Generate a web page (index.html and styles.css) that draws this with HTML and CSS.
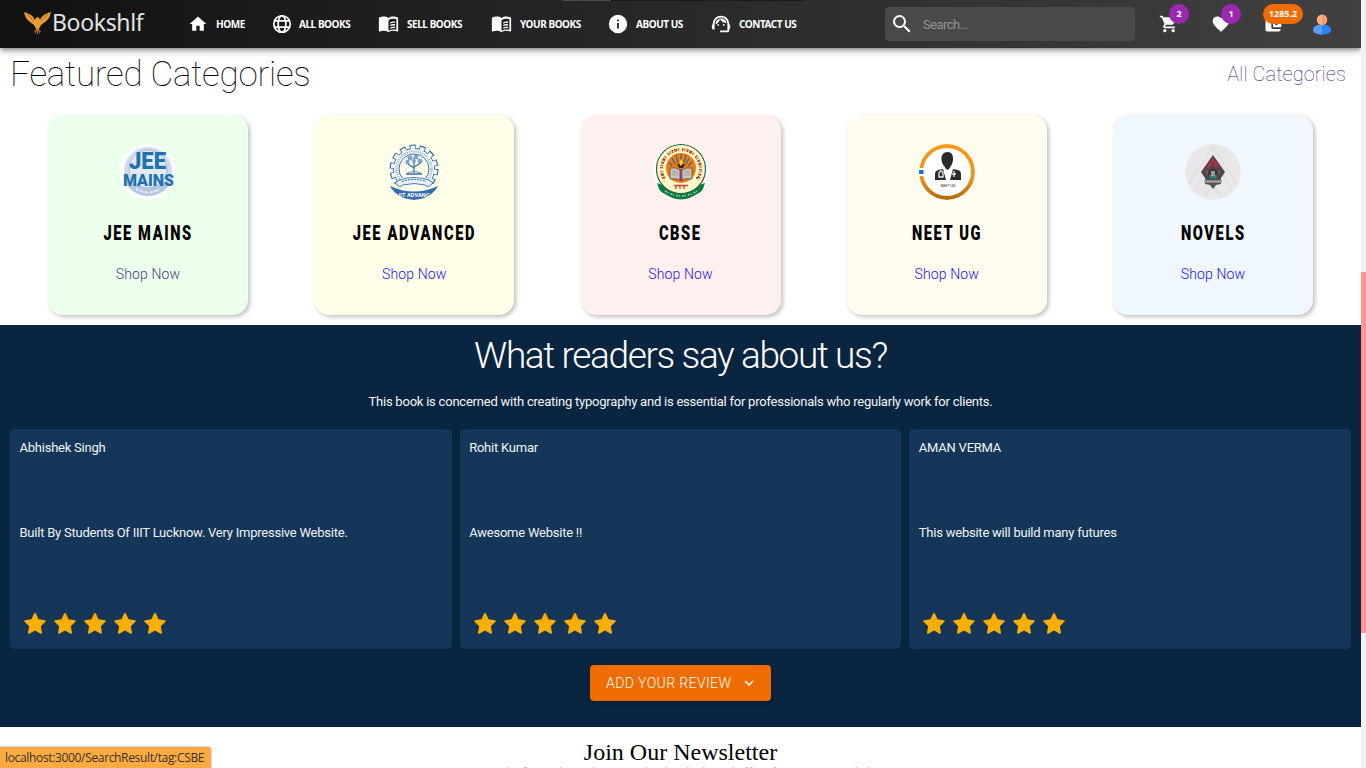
FILE: index.html
```html
<!DOCTYPE html>
<html lang="en">
<head>
<meta charset="utf-8">
<title>Bookshlf</title>
<link rel="stylesheet" href="styles.css">
</head>
<body>
<svg class="defs" width="0" height="0">
  <symbol id="book" viewBox="0 0 24 24"><path d="M12 4.500C9 2.400 4.300 2.500 1.500 4Q1 4.300 1 5v14.500c0 .6.400.7.900.5 3.300-1.200 7-1 10.100.9 3-1.900 6.700-2.100 10.100-.9.500.2.900 0 .9-.500V5q0-.7-.500-1C19.700 2.500 15 2.400 12 4.500zM21 18c-2.700-.8-6.300-.4-9 1V7c2.500-1.500 6.200-1.900 9-1z"/><path d="M14 9.300c1.900-.8 3.500-.9 5.500-.6v1.500c-2-.3-3.600-.1-5.500.6zm0 3c1.900-.8 3.500-.9 5.500-.6v1.500c-2-.3-3.600-.1-5.500.6zm0 3c1.900-.8 3.500-.9 5.500-.6v1.500c-2-.3-3.600-.1-5.500.6z"/></symbol>
  <symbol id="star" viewBox="0 0 24 24"><path d="M12 1c.400 0 .7.200.9.600l3 6.300 6.900 1c.9.100 1.200 1.100.6 1.700l-5 5 1.200 7c.1.800-.7 1.400-1.400 1L12 20.300l-6.200 3.300c-.7.400-1.500-.2-1.400-1l1.200-7-5-5C0 10 .3 9 1.200 8.900l6.900-1 3-6.300c.2-.4.5-.6.9-.6z"/></symbol>
</svg>
<div class="page">
  <header class="navbar">
    <div class="tab-strip"></div>
    <a class="logo">
      <svg class="bird" viewBox="0 0 27 23"><path fill="#e79a35" d="M0 0c4 1 9 3 11 8l1-2 1.500-1L15 6l1 2c2-5 7-7 11-8-1 5-3 8-6 10l-4 3-2 4-1.500 1L12 17l-2-4-4-3C3 8 1 5 0 0z"/><path stroke="#6b4219" stroke-width=".5" fill="none" d="M3 2l7 7M24 2l-7 7"/><path fill="none" stroke="#b9742b" stroke-width="1.200" d="M13.500 17l-3 3M13.500 17l3 3M13.500 17v5M11 21h1M15 21h1"/></svg>
      <span class="brand">Bookshlf</span>
    </a>
    <nav class="links">
      <a class="link home"><svg viewBox="0 0 24 24"><path d="M10 20v-6h4v6h5v-8h3L12 3 2 12h3v8z"/></svg><span>HOME</span></a>
      <a class="link all"><svg viewBox="0 0 24 24"><g fill="none" stroke="#fff" stroke-width="1.900"><circle cx="12" cy="12" r="9"/><ellipse cx="12" cy="12" rx="4.200" ry="9"/><path d="M3.500 8.700h17M3.500 15.300h17"/></g></svg><span>ALL BOOKS</span></a>
      <a class="link sell"><svg><use href="#book"/></svg><span>SELL BOOKS</span></a>
      <a class="link your"><svg><use href="#book"/></svg><span>YOUR BOOKS</span></a>
      <a class="link about"><svg viewBox="0 0 24 24"><path d="M12 2a10 10 0 1 0 0 20 10 10 0 0 0 0-20zm1 15h-2v-6h2zm0-8h-2V7h2z"/></svg><span>ABOUT US</span></a>
      <a class="link contact"><svg viewBox="0 0 24 24"><path d="M21 12.220C21 6.730 16.740 3 12 3c-4.690 0-9 3.650-9 9.280-.600.340-1 .980-1 1.720v2c0 1.100.900 2 2 2h1v-6.100c0-3.870 3.130-7 7-7s7 3.130 7 7V19h-8v2h8c1.100 0 2-.900 2-2v-1.220c.590-.310 1-.920 1-1.640v-2.300c0-.700-.410-1.310-1-1.620z"/><circle cx="9" cy="13" r="1"/><circle cx="15" cy="13" r="1"/><path d="M18 11.030A6.040 6.040 0 0 0 12.050 6c-3.030 0-6.290 2.510-6.030 6.450a8.075 8.075 0 0 0 4.860-5.890c1.310 2.630 4 4.440 7.120 4.470z"/></svg><span>CONTACT US</span></a>
    </nav>
    <div class="search">
      <svg viewBox="0 0 24 24"><path d="M15.500 14h-.790l-.280-.270A6.471 6.471 0 0 0 16 9.500 6.500 6.500 0 1 0 9.500 16c1.610 0 3.090-.590 4.230-1.570l.270.280v.790l5 4.990L20.490 19zm-6 0a4.500 4.500 0 1 1 0-9 4.500 4.500 0 0 1 0 9z"/></svg>
      <span>Search...</span>
    </div>
    <div class="actions">
      <a class="action"><svg viewBox="0 0 24 24"><path d="M7 18a2 2 0 1 0 0 4 2 2 0 0 0 0-4zM1 2v2h2l3.600 7.590-1.350 2.450C4.500 15.400 5.500 17 7 17h12v-2H7.420l-.03-.250L8.100 13h7.450c.750 0 1.410-.410 1.750-1.030L20.880 5.500A1 1 0 0 0 20 4H5.210l-.940-2zm16 16a2 2 0 1 0 0 4 2 2 0 0 0 0-4z"/></svg><b class="badge">2</b></a>
      <a class="action"><svg viewBox="0 0 24 24"><path d="M12 21.350l-1.450-1.320C5.400 15.360 2 12.280 2 8.500 2 5.420 4.420 3 7.500 3c1.740 0 3.410.810 4.500 2.090C13.090 3.810 14.760 3 16.500 3 19.580 3 22 5.420 22 8.500c0 3.780-3.400 6.860-8.550 11.540z"/></svg><b class="badge">1</b></a>
      <a class="action"><svg viewBox="0 0 24 24"><path fill-rule="evenodd" d="M21 18v1c0 1.100-.9 2-2 2H5c-1.110 0-2-.9-2-2V5c0-1.100.89-2 2-2h14c1.100 0 2 .9 2 2v1h-9c-1.110 0-2 .9-2 2v8c0 1.100.89 2 2 2zm-9-2h10V8H12zm4-2.500a1.500 1.500 0 1 1 0-3 1.500 1.500 0 0 1 0 3z"/></svg><b class="badge wallet">1285.2</b></a>
      <a class="user"><svg viewBox="0 0 18 21"><path fill="#5c9dfa" d="M9 11C5 10 0 12 0 16c0 3 4 4.500 9 4.500z"/><path fill="#2684ff" d="M9 11c4-1 9 1 9 5 0 3-4 4.500-9 4.500z"/><circle cx="9" cy="5.700" r="5.200" fill="#ffb27d"/><path fill="#f5a06c" d="M9 .5a5.200 5.200 0 0 1 0 10.400z"/></svg></a>
    </div>
  </header>

  <section class="featured">
    <div class="featured-head"><h1>Featured Categories</h1><a>All Categories</a></div>
    <div class="cards">
      <article class="card green">
        <svg class="emblem" viewBox="0 0 56 56"><circle cx="28" cy="28" r="28" fill="#fff"/><circle cx="28" cy="27" r="24" fill="#d5deed"/><path d="M4 35q24 14 48 0c-3 10-13 17-24 17S7 45 4 35z" fill="#b5c6e0"/><circle cx="28" cy="25" r="19" fill="#e3e9f3" stroke="#a9bbd8"/><circle cx="28" cy="27" r="22" fill="none" stroke="#b6c5dd" stroke-dasharray="1 2"/><path d="M16 45q12 7 24 0" fill="none" stroke="#edf2f8" stroke-width="2" stroke-dasharray="2 1 1 1"/><g fill="#1f72ad" font-family="Roboto" font-weight="900" text-anchor="middle"><text x="27.500" y="25" font-size="23" textLength="37" lengthAdjust="spacingAndGlyphs">JEE</text><text x="28.500" y="41.500" font-size="17" textLength="51" lengthAdjust="spacingAndGlyphs">MAINS</text></g></svg>
        <h2>JEE MAINS</h2><a class="visited">Shop Now</a>
      </article>
      <article class="card yellow">
        <svg class="emblem" viewBox="0 0 56 56"><circle cx="28" cy="25" r="22" fill="none" stroke="#356daf" stroke-width="5" stroke-dasharray="6 3.870"/><circle cx="28" cy="25" r="20.500" fill="#fff" stroke="#356daf" stroke-width="1"/><circle cx="28" cy="25" r="21.500" fill="none" stroke="#fff" stroke-width="3.500" stroke-dasharray="4.300 5.350" stroke-dashoffset="-.8"/><circle cx="28" cy="25" r="17.500" fill="none" stroke="#88a9d0" stroke-width="2.500" stroke-dasharray="1 1.200"/><circle cx="28" cy="25" r="15" fill="#ffffe9" stroke="#356daf"/><path d="M7 56V42l8-8h26l8 8v14z" fill="#ffffe9"/><path d="M28 14v15M28 24l-6-4M28 23l7-4M20 30h16" stroke="#356daf" stroke-width="1.300"/><path d="M21 29l7-2 7 2" fill="none" stroke="#6e97c7"/><g fill="#7fa3cf"><circle cx="24" cy="14" r="2.500"/><circle cx="30" cy="13" r="2.500"/><circle cx="21.500" cy="18" r="2.200"/><circle cx="34" cy="17" r="2.500"/><circle cx="28" cy="17" r="2"/></g><path d="M13 36q15-5 30 0l4 3-5 4-3-2q-11-3-22 0l-3 2-5-4z" fill="#e8f0f7" stroke="#356daf" stroke-width=".9"/><path d="M16 37.500q12-4 24 0" fill="none" stroke="#356daf" stroke-dasharray="2 1"/><path d="M4 42q24 11 48 0-1 4-7 10-17 8-34 0-6-6-7-10z" fill="#356daf"/><text x="28" y="53" fill="#fff" font-family="Roboto" font-size="5.500" font-weight="700" text-anchor="middle" textLength="31">IIT ADVANC</text></svg>
        <h2>JEE ADVANCED</h2><a>Shop Now</a>
      </article>
      <article class="card pink">
        <svg class="emblem" viewBox="0 0 56 56"><circle cx="28" cy="28" r="28" fill="#fff"/><path d="M4 39l6 2q18 14 36 0l6-2-3 9-5 2q-16 11-32 0l-5-2z" fill="#087b43"/><circle cx="28" cy="25" r="24.500" fill="#fff9c9" stroke="#276044" stroke-width="1.200"/><circle cx="28" cy="25" r="19.500" fill="none" stroke="#bd4a34" stroke-width="3" stroke-dasharray="1.500 1 1 1.300 2 1 3 1 1 3" pathLength="125"/><path d="M10 34l36 0-5 11q-13 7-26 0z" fill="#fff9c9"/><path d="M21 41.500h14M23 41v4M27 42v3M31 41v4" fill="none" stroke="#bd4a34" stroke-width="1.300"/><circle cx="11" cy="34" r="1" fill="#bd4a34"/><circle cx="44" cy="34" r="1" fill="#276044"/><circle cx="28" cy="24" r="15" fill="#ef7b10"/><path d="M16 18l3 4m0-8 3 6m1-9 2 8m3-9v9m5-8-2 8m5-5-3 6m6-2-4 4" stroke="#3c679d" stroke-width="1.300"/><path d="M24 20h8l-2 4h-4z" fill="#32251d"/><path d="M28 15q3 4 0 7-3-3 0-7" fill="#ffdc26"/><path d="M17 24q6-1 11 2 5-3 11-2v11q-6-1-11 1-5-2-11-1z" fill="#c9c9bd" stroke="#4c4b42" stroke-width=".8"/><path d="M26.500 25h3v12h-3z" fill="#913d7e"/><path d="M19 27h6M19 29h6M19 31h6M31 27h6M31 29h6M31 31h6" stroke="#888" stroke-width=".6"/><path d="M12 47q16 10 32 0" fill="none" stroke="#9ac6a3" stroke-width="1.700" stroke-dasharray="2 1 1 2"/></svg>
        <h2>CBSE</h2><a>Shop Now</a>
      </article>
      <article class="card cream">
        <svg class="emblem" viewBox="0 0 56 56"><defs><linearGradient id="ring" x2="0" y2="1"><stop stop-color="#f79b19"/><stop offset=".6" stop-color="#ed9516"/><stop offset="1" stop-color="#b96c0b"/></linearGradient></defs><circle cx="28" cy="28" r="26" fill="#fff" stroke="url(#ring)" stroke-width="4"/><path d="M0 24h6v8H0z" fill="#fff"/><path d="M0 26h4.500v4H0z" fill="#1672ba"/><path d="M28.500 8c4 0 6 3 5.500 8-.5 4-2 6-3 7v1l-2.500 2-2.500-2v-1c-1-1-3-3-3.500-7-.5-5 2-8 6-8zM24 25l3 11H16v-6q0-3 3-4zM34 25l-3 11h11v-6q0-3-3-4z" fill="#2b2b2a"/><path d="M20 33v-4q2-4 4 0v4zM35 27v6M33 30h4" fill="none" stroke="#eee" stroke-width="1.300"/><text x="29" y="43" fill="#333" font-family="Roboto" font-size="4" text-anchor="middle" textLength="15">NEET UG</text></svg>
        <h2>NEET UG</h2><a>Shop Now</a>
      </article>
      <article class="card blue">
        <svg class="emblem" viewBox="0 0 56 56"><circle cx="28" cy="28" r="28" fill="#e8e8e8"/><path d="M4 40L28 3l24 37M10 46l18-36 18 36M19 53l9-11 9 11" fill="none" stroke="#e0e0e0" stroke-width="1.500"/><path d="M28 11l12 17-6 9H22l-6-9z" fill="#594245"/><path d="M28 13l7 11-5-1-2-5-2 5-5 2z" fill="#a5354b"/><path d="M20 28l3-3v7zM36 28l-3-3v7z" fill="#665b53"/><path d="M23 28q5-7 10 0v6H23z" fill="#34383b"/><path d="M24 31h8v3h-8z" fill="#248c87"/><path d="M26 27h4v5h-4z" fill="#999"/><path d="M20 35h16v5l-5 1-3 4-3-4-5-1z" fill="#555"/><path d="M19 37.500h18" stroke="#aaa" stroke-width="2"/></svg>
        <h2>NOVELS</h2><a>Shop Now</a>
      </article>
    </div>
  </section>

  <section class="reviews">
    <h2>What readers say about us?</h2>
    <p class="intro">This book is concerned with creating typography and is essential for professionals who regularly work for clients.</p>
    <div class="review-grid">
      <article class="review"><p>Abhishek Singh</p><p class="quote">Built By Students Of IIIT Lucknow. Very Impressive Website.</p><div class="stars"><svg><use href="#star"/></svg><svg><use href="#star"/></svg><svg><use href="#star"/></svg><svg><use href="#star"/></svg><svg><use href="#star"/></svg></div></article>
      <article class="review"><p>Rohit Kumar</p><p class="quote">Awesome Website !!</p><div class="stars"><svg><use href="#star"/></svg><svg><use href="#star"/></svg><svg><use href="#star"/></svg><svg><use href="#star"/></svg><svg><use href="#star"/></svg></div></article>
      <article class="review"><p>AMAN VERMA</p><p class="quote">This website will build many futures</p><div class="stars"><svg><use href="#star"/></svg><svg><use href="#star"/></svg><svg><use href="#star"/></svg><svg><use href="#star"/></svg><svg><use href="#star"/></svg></div></article>
    </div>
    <button class="add-review"><span>ADD YOUR REVIEW</span><svg viewBox="0 0 24 24"><path d="M7.410 8.590L12 13.170l4.590-4.580L18 10l-6 6-6-6z"/></svg></button>
  </section>

  <section class="newsletter">
    <h2>Join Our Newsletter</h2>
    <p>Be the first to hear about new books, deals and offers from our store daily</p>
  </section>
</div>
<div class="scrollbar"><div class="thumb"></div></div>
<div class="status">localhost:3000/SearchResult/tag:CSBE</div>
</body>
</html>
```
FILE: styles.css
```css
* { box-sizing: border-box; }
body { margin: 0; width: 1366px; height: 768px; overflow: hidden; display: flex; background: #fff; font-family: Roboto, sans-serif; }
h1, h2, p { margin: 0; font-weight: 400; }
.defs { position: absolute; }
svg { flex: none; }
.page { width: 1361px; height: 768px; overflow: hidden; }

.navbar { position: relative; z-index: 1; height: 48px; display: flex; align-items: center; background: linear-gradient(90deg, #111, #414141); box-shadow: 0 2px 4px -1px rgba(0,0,0,.35), 0 4px 6px rgba(0,0,0,.22); color: #fff; }
.tab-strip { position: absolute; left: 563px; top: 0; width: 241px; height: 1px; background: linear-gradient(90deg, #4b4b4b 48px, #1b1b1b 48px); }
.logo { width: 164px; padding-left: 24px; display: flex; align-items: center; }
.bird { width: 27px; height: 23px; margin-top: -2px; }
.brand { font: 400 23px/30px "Noto Sans", sans-serif; color: #e2e2e2; margin: -4px 0 0 1px; letter-spacing: -.35px; }
.links { display: flex; margin-left: 24px; width: 697px; }
.link { display: flex; align-items: center; height: 24px; }
.link svg { width: 20px; height: 20px; margin-right: 8px; fill: #fff; }
.link span { font: 700 10px/14px "Noto Sans", sans-serif; letter-spacing: -.45px; white-space: nowrap; }
.home { width: 83px; }
.all { width: 107px; }
.all svg, .about svg, .contact svg { width: 22px; height: 22px; margin-right: 6px; }
.sell { width: 113px; }
.sell svg, .your svg { width: 21px; height: 21px; }
.your { width: 116px; }
.about { width: 103px; }
.about svg, .contact svg { margin-right: 7px; }
.search { width: 250px; height: 34px; border-radius: 4px; background: #494949; display: flex; align-items: center; padding-left: 5px; }
.search svg { width: 24px; height: 24px; fill: #fff; }
.search span { margin-left: 9px; font-size: 13px; color: #939393; letter-spacing: -.55px; }
.actions { display: flex; margin-left: 24px; align-items: center; }
.action { position: relative; width: 52px; height: 20px; }
.action svg { display: block; width: 20px; height: 20px; fill: #fff; }
.badge { position: absolute; left: 10px; top: -10px; width: 20px; height: 20px; border-radius: 10px; background: #9c27b0; font: 700 9px/20px "Noto Sans", sans-serif; text-align: center; }
.wallet { left: 0; width: 40px; background: #ef6c00; }
.user { margin-left: -2px; height: 21px; }
.user svg { width: 18px; height: 21px; display: block; }

.featured { height: 277px; }
.featured-head { height: 67px; padding: 0 15px 15px 10px; display: flex; align-items: center; justify-content: space-between; }
.featured-head h1 { font-size: 35px; font-weight: 100; letter-spacing: -.23px; }
.featured-head a { font-size: 20px; font-weight: 100; color: #3d1478; letter-spacing: .08px; }
.cards { display: flex; gap: 66.250px; padding-left: 48px; }
.card { width: 200px; height: 200px; border-radius: 15px; box-shadow: 2px 2px 4px rgba(0,0,0,.25); display: flex; flex-direction: column; align-items: center; padding-top: 29px; }
.emblem { width: 56px; height: 56px; border-radius: 50%; }
.card h2 { font: 900 20px/24px Roboto, sans-serif; color: #000; margin-top: 21px; letter-spacing: 2.200px; white-space: nowrap; transform: scaleX(.73); }
.card a { font-size: 14px; line-height: 20px; font-weight: 300; margin-top: 19px; color: #2010ee; letter-spacing: .15px; }
.card .visited { color: #4b3a78; }
.green { background: #edffed; }
.yellow { background: #ffffe9; }
.pink { background: #fff0f0; }
.cream { background: #fffbef; }
.blue { background: #f0f7ff; }

.reviews { height: 402px; background: #0a2540; color: #fff; display: flex; flex-direction: column; align-items: center; }
.reviews h2 { font-size: 37px; line-height: 44px; font-weight: 300; margin-top: 9px; letter-spacing: -1.370px; }
.intro { font-size: 13px; line-height: 18px; margin-top: 15px; letter-spacing: -.225px; color: #f3f5f7; }
.review-grid { align-self: stretch; display: grid; grid-template-columns: repeat(3, 1fr); gap: 8px; padding: 0 10px; margin-top: 18px; }
.review { height: 220px; border-radius: 5px; background: #153658; padding: 10px 9.500px; font-size: 13px; line-height: 18px; letter-spacing: -.23px; color: #f0f3f5; }
.quote { margin-top: 67px; }
.stars { display: flex; gap: 8px; padding-left: 4.500px; margin-top: 70px; }
.stars svg { width: 22px; height: 22px; fill: #faaf00; }
.add-review { margin-top: 16px; width: 181px; height: 36px; border: 0; border-radius: 4px; background: #ef6c00; color: #fff; box-shadow: 0 2px 4px rgba(0,0,0,.3); display: flex; align-items: center; padding: 0 0 1px 16px; font: 300 14px/20px Roboto, sans-serif; letter-spacing: .4px; white-space: nowrap; }
.add-review svg { width: 18px; height: 18px; margin: 1px 0 0 9px; fill: #fff; }

.newsletter { text-align: center; }
.newsletter h2 { font: 400 24px/28px "Liberation Serif", serif; margin-top: 11px; }
.newsletter p { font-size: 12px; line-height: 14px; color: #bbb; margin-top: 0; }
.scrollbar { width: 5px; height: 768px; padding-top: 272px; background: #f1f1f1; }
.thumb { height: 361px; background: #ff9797; }
.status { position: absolute; left: 0; bottom: 0; width: 212px; height: 22px; padding-left: 5px; background: #ffab40; border: 1px solid #d5d8dc; border-width: 1px 1px 0 0; border-radius: 0 4px 0 0; font: 12px/21px "Open Sans", sans-serif; color: #333; letter-spacing: -.34px; white-space: nowrap; }
```
